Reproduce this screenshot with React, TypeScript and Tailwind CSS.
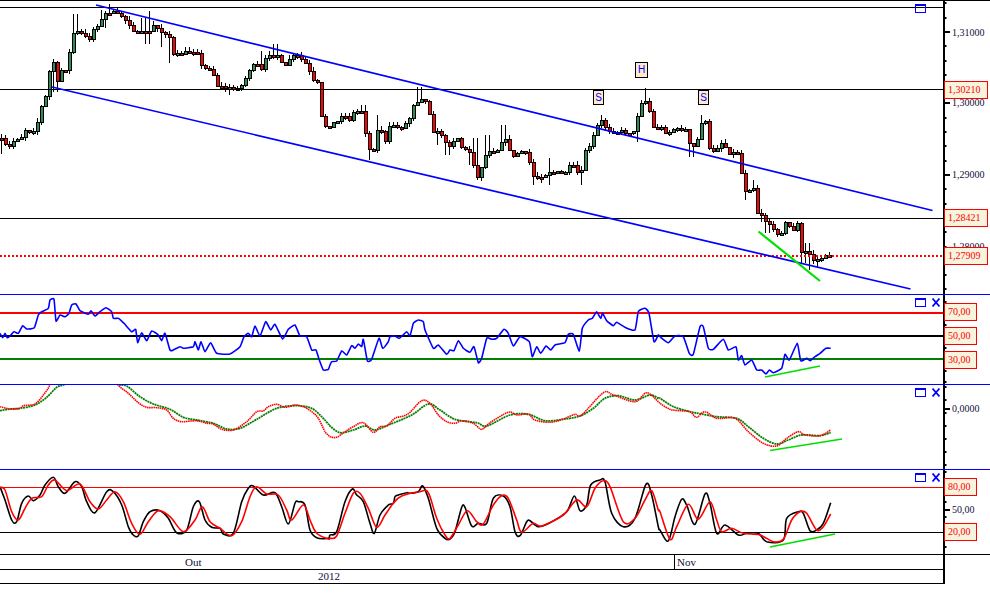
import type { ReactNode } from 'react';

// traced from the chart, "x,y" in zoomed crop pixels, ox/oy is the crop origin
const trace = (ox: number, oy: number, s: string): number[][] =>
  s.split(' ').map((p) => {
    const [x, y] = p.split(',').map(Number);
    return [ox + x / 3, oy + y / 3];
  });

// catmull-rom through the traced points, k sets how round the line gets
const smooth = (pts: number[][], k: number) => {
  let d = `M${pts[0][0].toFixed(1)} ${pts[0][1].toFixed(1)}`;
  for (let i = 0; i < pts.length - 1; i++) {
    const p0 = pts[Math.max(i - 1, 0)];
    const p1 = pts[i];
    const p2 = pts[i + 1];
    const p3 = pts[Math.min(i + 2, pts.length - 1)];
    const c1x = p1[0] + (p2[0] - p0[0]) * k;
    const c1y = p1[1] + (p2[1] - p0[1]) * k;
    const c2x = p2[0] - (p3[0] - p1[0]) * k;
    const c2y = p2[1] - (p3[1] - p1[1]) * k;
    d += `C${c1x.toFixed(1)} ${c1y.toFixed(1)} ${c2x.toFixed(1)} ${c2y.toFixed(1)} ${p2[0].toFixed(1)} ${p2[1].toFixed(1)}`;
  }
  return d;
};

const price = [
  ...trace(0, 0, '0,415 15,435 30,440 45,410 60,420 70,385 90,395 105,385 115,350 125,310 140,280 148,205 160,185 168,260 180,210 200,205 215,100 235,95 265,120 275,90 295,70 315,40 335,35 360,45 385,70 415,110 430,85 445,100 460,75 490,100 505,95 515,165 540,160 590,150 605,205 635,205 645,255 690,265 730,255 740,215 765,190 785,210 800,160 835,165 850,210 870,170 890,165 920,195 935,240 955,250 965,375 985,380'),
  ...trace(330, 70, '0,160 20,155 35,130 55,150 70,125 100,120 105,185 110,240 130,235 145,160 165,215 180,160 210,175 235,150 250,100 280,80 295,120 310,185 330,185 350,230 380,200 395,235 420,245 440,325 460,270 470,240 500,240 515,208 530,210 545,265 570,240 590,255 610,320 630,320 655,305 700,310 720,285 735,290 750,330 760,240 780,230 795,175 815,150 830,180 880,185 915,185 925,100 950,90 965,160 975,190 985,165'),
  ...trace(660, 70, '0,170 20,190 40,175 80,180 90,240 110,215 120,155 135,155 145,235 160,240 190,212 200,250 235,245 240,310 250,310 255,360 280,350 285,425 310,435 320,470 335,450 340,490 365,485 370,460 385,455 390,490 410,465 415,445 420,550 445,540 450,570 480,565 495,560 515,555'),
];

const spikes = [
  [75, 14], [100, 10], [110, 4], [150, 11], [143, 18], [105, 28], [147, 44], [162, 47], [170, 63], [260, 51], [275, 44], [2, 154], [55, 92], [230, 95], [419, 87], [503, 125], [378, 115], [363, 105], [475, 138], [487, 135], [532, 185], [542, 183], [548, 158], [550, 185], [581, 185], [370, 160], [437, 145], [447, 155], [601, 115], [645, 88], [637, 142], [468, 165], [701, 115], [689, 157], [693, 157], [745, 200], [762, 222], [767, 233], [753, 180], [807, 243], [803, 263], [810, 270], [817, 267], [830, 252],
];

const priceAt = (x: number) => {
  for (let i = 1; i < price.length; i++) {
    if (x <= price[i][0]) {
      const a = price[i - 1];
      const b = price[i];
      return a[1] + ((b[1] - a[1]) * (x - a[0])) / Math.max(b[0] - a[0], 0.1);
    }
  }
  return price[price.length - 1][1];
};

let seed = 7;
const rnd = () => {
  seed = (seed * 16807) % 2147483647;
  return seed / 2147483647;
};

interface Candle {
  x: number;
  open: number;
  close: number;
  high: number;
  low: number;
}

const candles: Candle[] = [];
let prevClose = priceAt(0);
for (let x = 1; x <= 830; x += 4) {
  const close = Math.round(priceAt(x) + (rnd() - 0.5) * 3);
  const open = Math.round(prevClose);
  let high = Math.min(open, close) - Math.round(rnd() * 4);
  let low = Math.max(open, close) + Math.round(rnd() * 4);
  for (const s of spikes) {
    if (Math.abs(s[0] - x) <= 2) {
      if (s[1] < high) high = s[1];
      if (s[1] > low) low = s[1];
    }
  }
  candles.push({ x, open, close, high, low });
  prevClose = close;
}

const rsi = smooth([
  ...trace(0, 290, '0,130 8,143 15,130 22,143 30,138 42,125 55,130 68,107 80,117 103,113 115,75 125,65 145,55 150,30 162,28 168,93 180,75 195,80 207,70 215,45 228,42 240,62 265,73 273,62 285,78 300,65 318,53 335,65 340,85 355,85 372,100 395,125 407,118 413,158 425,128 440,152 455,123 475,135 485,152 495,130 510,180 520,180 540,170 550,175 580,170 585,155 595,180 603,155 615,185 632,158 650,190 690,192 720,170 732,140 745,130 755,140 765,108 780,138 797,95 812,120 825,103 848,147 865,118 885,105 900,138 920,140 935,180 948,180 958,210 970,240 985,238'),
  ...trace(330, 290, '0,225 5,215 20,213 35,183 50,195 65,167 75,175 85,162 95,170 100,148 112,212 125,208 147,145 158,175 175,155 180,140 195,138 208,145 230,125 240,138 250,100 265,90 280,95 285,120 310,175 325,165 350,193 360,180 372,182 385,152 400,175 420,187 432,170 445,218 455,205 470,145 485,148 500,145 522,118 535,130 550,168 570,140 598,155 607,200 620,170 632,190 648,168 662,180 675,165 705,158 715,133 730,133 748,183 757,115 775,90 787,85 800,65 812,85 818,70 830,92 850,107 860,97 885,112 915,120 925,65 945,55 957,70 972,155 985,135'),
  ...trace(660, 290, '0,140 25,158 45,138 70,140 88,190 100,193 120,110 130,110 145,175 160,178 190,148 205,180 228,170 235,210 245,197 255,225 275,210 290,240 305,240 318,252 328,240 340,248 365,235 375,193 388,210 412,160 422,212 440,205 450,212 465,200 480,190 498,175 512,175'),
], 0.08);

const macdFast = smooth([
  ...trace(0, 380, '0,80 30,87 60,85 70,77 105,72 130,45 148,18 155,-15 345,-15 352,13 385,40 415,68 440,82 470,83 500,90 520,115 545,125 590,122 620,130 640,132 665,148 700,150 740,125 770,95 790,93 805,80 830,73 855,82 885,75 910,80 935,95 955,115 975,155 985,165'),
  ...trace(330, 380, '0,170 20,172 45,155 70,140 100,128 130,157 150,140 170,138 195,115 220,108 240,97 275,62 300,70 325,105 350,125 375,130 395,122 430,130 455,148 480,128 535,97 560,105 595,102 615,120 660,127 700,117 735,103 755,105 820,38 850,45 915,65 950,38 985,65'),
  ...trace(660, 290, '0,340 30,358 60,362 90,365 110,382 135,365 170,385 225,385 265,425 310,460 350,468 380,445 415,425 435,435 480,437 512,420'),
], 0.16);

const macdSlow = smooth([
  ...trace(0, 380, '0,92 30,87 60,85 105,75 140,52 170,22 195,12 210,-15 340,-15 355,13 380,18 420,50 460,72 510,88 550,112 590,120 640,130 680,147 720,145 770,118 830,85 890,77 935,85 965,110 985,132'),
  ...trace(330, 380, '0,138 30,158 70,150 105,138 135,150 175,135 245,105 295,72 330,90 375,118 440,128 470,138 540,105 595,103 645,122 700,118 750,108 790,85 825,55 865,47 915,60 960,45 985,55'),
  ...trace(660, 290, '0,325 40,350 90,365 125,372 170,380 230,385 265,410 310,445 350,462 385,450 425,435 480,437 512,428'),
], 0.16);

const stochK = smooth([
  ...trace(0, 470, '0,50 15,90 35,150 50,155 65,100 85,78 100,92 120,75 135,45 160,22 175,50 195,70 225,35 245,50 260,95 285,128 320,65 340,65 365,105 385,170 400,195 415,197 430,155 450,125 480,122 505,145 530,188 560,180 580,110 598,95 615,150 635,172 660,175 670,192 700,190 725,95 745,55 760,48 790,75 825,68 845,110 865,162 885,100 895,95 915,105 930,180 950,203 985,205'),
  ...trace(330, 470, '0,195 20,185 45,95 67,57 80,75 100,95 120,160 133,190 150,135 175,105 190,100 195,80 205,75 230,68 240,70 265,65 278,48 295,85 320,175 345,205 360,207 375,185 395,112 405,112 425,168 445,160 470,160 490,85 520,78 540,110 555,185 570,197 590,155 600,152 625,170 660,158 710,125 733,78 750,122 770,105 782,45 810,30 825,35 845,130 880,170 915,145 948,43 965,75 985,170'),
  ...trace(660, 470, '0,180 25,213 45,140 65,88 80,105 105,163 135,72 150,100 170,190 195,165 235,195 260,190 295,190 320,215 370,210 380,145 415,125 430,130 450,182 470,180 490,160 512,98'),
], 0.16);

const stochD = smooth([
  ...trace(0, 470, '0,52 15,60 35,125 55,150 75,115 95,85 125,80 145,45 165,30 200,62 240,42 270,95 295,117 320,90 345,65 370,95 395,160 420,193 445,155 475,122 510,140 550,185 585,150 607,110 630,155 660,175 695,197 725,155 750,80 770,50 800,72 835,75 860,120 875,150 910,105 930,150 950,190 985,207'),
  ...trace(330, 470, '0,205 20,198 45,130 70,70 90,70 115,115 140,172 165,135 190,100 215,78 270,65 295,68 320,145 345,195 360,205 385,165 412,122 440,155 460,162 490,105 515,77 535,85 560,150 575,187 610,160 635,168 700,135 740,90 770,110 795,55 820,32 840,50 880,155 915,145 945,90 965,62 985,120'),
  ...trace(660, 470, '0,125 30,208 50,170 85,103 115,148 150,95 170,150 185,185 215,175 250,190 300,195 340,215 370,208 395,150 420,125 440,130 470,180 490,170 512,132'),
], 0.16);

const range = (from: number, to: number, step: number) => {
  const out: number[] = [];
  for (let v = from; v <= to; v += step) out.push(v);
  return out;
};

const HLine = ({ y, color = '#000', w = 1, dash }: { y: number; color?: string; w?: number; dash?: string }) => (
  <line x1={0} x2={943} y1={y} y2={y} stroke={color} strokeWidth={w} strokeDasharray={dash} shapeRendering="crispEdges" />
);

const Trend = ({ a, b, color = '#0000ff', w = 1.7 }: { a: number[]; b: number[]; color?: string; w?: number }) => (
  <line x1={a[0]} y1={a[1]} x2={b[0]} y2={b[1]} stroke={color} strokeWidth={w} />
);

const Curve = ({ d, color, w = 1.6, dash }: { d: string; color: string; w?: number; dash?: string }) => (
  <path d={d} fill="none" stroke={color} strokeWidth={w} strokeDasharray={dash} strokeLinejoin="round" />
);

const Buttons = ({ close = true }: { close?: boolean }) => (
  <div className="absolute right-[3px] top-[3px] w-[25px] flex items-start gap-[6px]">
    <div className="w-[11px] h-[9px] border border-[#0000ff] border-t-2" />
    {close && (
      <svg width="8" height="9" viewBox="0 0 8 9" className="block">
        <path d="M0.5 0.5L7.5 8.5M7.5 0.5L0.5 8.5" stroke="#0000ff" strokeWidth="1.7" fill="none" />
      </svg>
    )}
  </div>
);

const Flag = ({ text, className }: { text: string; className: string }) => (
  <div className={`absolute flex items-center justify-center bg-[#ffe9cf] border border-black text-[#0000ff] text-[10px] font-['Liberation_Sans',sans-serif] leading-none ${className}`}>
    {text}
  </div>
);

const Tag = ({ text, className }: { text: string; className: string }) => (
  <div className={`relative ml-px h-[18px] flex items-center pl-[3px] bg-[#f7f4dd] border border-[#ff0000] text-[#ff0000] text-[10px] leading-none ${className}`}>
    {text}
  </div>
);

const AxisText = ({ text, className = '' }: { text: string; className?: string }) => (
  <div className={`ml-[9px] h-[10px] text-[#10103a] text-[10px] leading-none ${className}`}>{text}</div>
);

interface PaneProps {
  top: number;
  height: number;
  border: string;
  ticks: number[];
  majors: number[];
  chart: ReactNode;
  overlay?: ReactNode;
  axis?: ReactNode;
  axisClass?: string;
}

const Pane = ({ top, height, border, ticks, majors, chart, overlay, axis, axisClass = '' }: PaneProps) => (
  <div className={`flex shrink-0 box-content border-b ${border}`}>
    <div className="relative w-[943px] shrink-0">
      <svg width={943} height={height} viewBox={`0 ${top} 943 ${height}`} className="block">
        {chart}
      </svg>
      {overlay}
    </div>
    <div className={`relative w-[47px] flex flex-col items-start ${axisClass}`}>
      <svg width={47} height={height} viewBox={`0 ${top} 47 ${height}`} className="absolute left-0 top-0 block">
        <line x1={1} x2={1} y1={top} y2={top + height} stroke="#000" strokeWidth={2} />
        {ticks.map((y) => (
          <rect key={y} x={2} y={Math.round(y) - 1} width={1.5} height={2} fill="#000" />
        ))}
        {majors.map((y) => (
          <rect key={y} x={2} y={Math.round(y) - 1} width={5} height={2} fill="#000" />
        ))}
      </svg>
      {axis}
    </div>
  </div>
);

export default function App() {
  return (
    <div className="w-[990px] h-[612px] bg-white overflow-hidden flex flex-col font-['Liberation_Serif',serif]">
      <div className="h-px bg-black shrink-0" />

      <Pane
        top={1}
        height={293}
        border="border-[#0000ff]"
        ticks={range(3.4, 292, 14.3)}
        majors={[32, 103, 175]}
        axisClass="pt-[27px]"
        chart={
          <>
            {candles.map((c) => (
              <line key={c.x} x1={c.x + 0.5} x2={c.x + 0.5} y1={c.high} y2={c.low} stroke="#000" strokeWidth={1} shapeRendering="crispEdges" />
            ))}
            {candles.map((c) => (
              <rect
                key={c.x}
                x={c.x - 0.5}
                y={Math.min(c.open, c.close) + 0.5}
                width={3}
                height={Math.max(Math.abs(c.open - c.close), 2)}
                fill={c.close < c.open ? '#2e8b57' : '#ff0000'}
                stroke="#000"
                strokeWidth={1}
                shapeRendering="crispEdges"
              />
            ))}
            <HLine y={7.5} />
            <HLine y={89.5} />
            <HLine y={218.5} />
            <HLine y={256} color="#ff0000" w={2} dash="2 2" />
            <Trend a={[96, 5]} b={[932.5, 210.5]} />
            <Trend a={[52, 87]} b={[910.5, 289]} />
            <Trend a={[758.5, 231.5]} b={[820, 281]} color="#00e000" w={2.2} />
          </>
        }
        overlay={
          <>
            <Buttons close={false} />
            <Flag text="S" className="left-[593px] top-[89px] w-[11px] h-[15px]" />
            <Flag text="H" className="left-[635px] top-[61px] w-[13px] h-[16px]" />
            <Flag text="S" className="left-[698px] top-[89px] w-[11px] h-[15px]" />
          </>
        }
        axis={
          <>
            <AxisText text="1,31000" />
            <Tag text="1,30210" className="w-[44px] mt-[43px]" />
            <AxisText text="1,30000" className="-mt-px" />
            <AxisText text="1,29000" className="mt-[62px]" />
            <Tag text="1,28421" className="w-[44px] mt-[29px]" />
            <AxisText text="1,28000" className="mt-[15px]" />
            <Tag text="1,27909" className="w-[44px] -mt-[5px] border-[#0000ff]" />
          </>
        }
      />

      <Pane
        top={295}
        height={89}
        border="border-[#0000ff]"
        ticks={range(301.5, 383, 11.5)}
        majors={[]}
        axisClass="pt-[8px] gap-[6px]"
        chart={
          <>
            <HLine y={313} color="#ff0000" w={2} />
            <HLine y={336} w={2} />
            <HLine y={359} color="#008000" w={2} />
            <Curve d={rsi} color="#0000ff" />
            <Trend a={[765, 377]} b={[820, 366]} color="#00e000" />
          </>
        }
        overlay={<Buttons />}
        axis={
          <>
            <Tag text="70,00" className="w-[33px]" />
            <Tag text="50,00" className="w-[33px]" />
            <Tag text="30,00" className="w-[33px]" />
          </>
        }
      />

      <Pane
        top={385}
        height={84}
        border="border-[#0000ff]"
        ticks={range(387, 468, 13)}
        majors={[409]}
        axisClass="pt-[19px]"
        chart={
          <>
            <Curve d={macdSlow} color="#008000" w={1.8} dash="2 0.6" />
            <Curve d={macdFast} color="#ff0000" w={1.6} dash="1.5 0.6" />
            <Trend a={[770, 450.5]} b={[842, 439]} color="#00e000" />
          </>
        }
        overlay={<Buttons />}
        axis={<AxisText text="0,0000" />}
      />

      <Pane
        top={470}
        height={84}
        border="border-black"
        ticks={range(472, 553, 7.5)}
        majors={[509.5]}
        axisClass="pt-[8px]"
        chart={
          <>
            <HLine y={487.5} color="#ff0000" />
            <HLine y={532.5} />
            <Curve d={stochK} color="#000" />
            <Curve d={stochD} color="#ff0000" />
            <Trend a={[770, 547]} b={[835, 534]} color="#00e000" />
          </>
        }
        overlay={<Buttons />}
        axis={
          <>
            <Tag text="80,00" className="w-[33px]" />
            <AxisText text="50,00" className="mt-[9px]" />
            <Tag text="20,00" className="w-[33px] mt-[8px]" />
          </>
        }
      />

      <div className="flex shrink-0">
        <div className="w-[943px] text-[11px] leading-none text-[#10103a]">
          <div className="flex h-[15px] items-center border-b border-black">
            <div className="w-[675px] h-full pl-[185px] flex items-center border-r border-black">Out</div>
            <div className="pl-[2px]">Nov</div>
          </div>
          <div className="flex h-[14px] items-center pl-[318px] border-b border-black">2012</div>
        </div>
        <div className="w-[2px] h-[29px] bg-black" />
      </div>
    </div>
  );
}
